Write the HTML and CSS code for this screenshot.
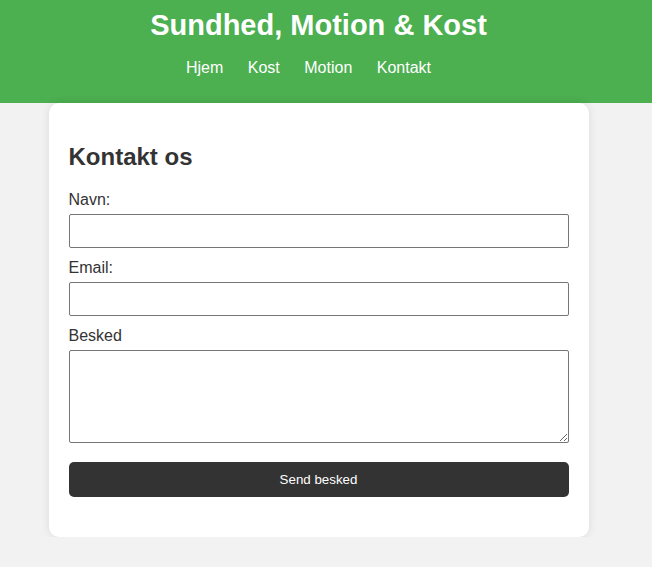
FILE: index.html
```html
<!DOCTYPE html>
<html lang="da">
<head>
    <meta charset="UTF-8">
    <meta name="viewport" content="width=device-width, initial-scale=1.0">
    <title>Kontakt - Sundhed, Motion &amp; Kost</title>
    <link rel="stylesheet" href="styles.css">
</head>
<body>
    <header class="site-header">
        <h1>Sundhed, Motion &amp; Kost</h1>
        <nav class="main-nav">
            <a href="#">Hjem</a>
            <a href="#">Kost</a>
            <a href="#">Motion</a>
            <a href="#">Kontakt</a>
        </nav>
    </header>

    <main class="container">
        <h2>Kontakt os</h2>
        <form class="contact-form">
            <label for="navn">Navn:</label>
            <input type="text" id="navn">

            <label for="email">Email:</label>
            <input type="email" id="email">

            <label for="besked">Besked</label>
            <textarea id="besked"></textarea>

            <button type="button">Send besked</button>
        </form>
    </main>
</body>
</html>
```

FILE: styles.css
```css
* {
    box-sizing: border-box;
}

body {
    margin: 0;
    padding-right: 15px;
    background: #f2f2f2;
    font-family: 'Liberation Sans', Arial, sans-serif;
    color: #333;
}

.site-header {
    background: #4caf50;
    color: white;
    text-align: center;
    margin-right: -15px;
    padding: 7px 15px 26px 0;
}

.site-header h1 {
    margin: 0;
    font-size: 29px;
    line-height: 37px;
}

.main-nav {
    margin-top: 15px;
}

.main-nav a {
    color: white;
    text-decoration: none;
    font-size: 16px;
    margin: 0 20px 0 0;
}

.container {
    width: 540px;
    margin: 0 auto;
    background: white;
    padding: 20px 20px 40px;
    border-radius: 10px;
    box-shadow: 0 0 10px rgba(0,0,0,0.1);
}

.container h2 {
    font-size: 24px;
    margin: 20px 0 19px;
    line-height: 28px;
}

.contact-form label {
    display: block;
    font-size: 16px;
    line-height: 19px;
    margin-bottom: 5px;
}

.contact-form input,
.contact-form textarea {
    display: block;
    width: 100%;
    padding: 8px;
    border: 1px solid #767676;
    border-radius: 2px;
    font-family: inherit;
    font-size: 14px;
    margin-bottom: 10px;
}

.contact-form input {
    height: 34px;
}

.contact-form textarea {
    height: 93px;
    margin-bottom: 19px;
}

.contact-form button {
    display: block;
    width: 100%;
    height: 35px;
    background: #333;
    color: white;
    border: none;
    border-radius: 5px;
    font-family: inherit;
    font-size: 13.33px;
    cursor: pointer;
}
```
